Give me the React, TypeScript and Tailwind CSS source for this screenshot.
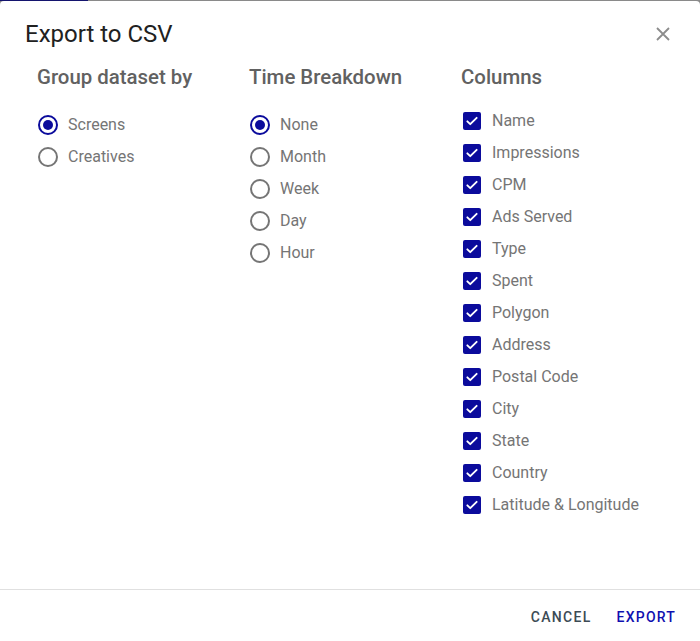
import React, { useState } from 'react';

const groupOptions = ['Screens', 'Creatives'];
const timeOptions = ['None', 'Month', 'Week', 'Day', 'Hour'];
const columnOptions = [
    'Name',
    'Impressions',
    'CPM',
    'Ads Served',
    'Type',
    'Spent',
    'Polygon',
    'Address',
    'Postal Code',
    'City',
    'State',
    'Country',
    'Latitude & Longitude',
];

const Radio = ({ label, checked, onClick }: { label: string; checked: boolean; onClick: () => void }) => (
    <button onClick={onClick} className="flex h-8 items-center gap-[10px] pl-px text-left">
        <span
            className={`flex h-5 w-5 items-center justify-center rounded-full border-2 ${checked ? 'border-[#0b0b9c]' : 'border-[#757575]'}`}
        >
            {checked && <span className="h-[10px] w-[10px] rounded-full bg-[#0b0b9c]" />}
        </span>
        <span className="text-[16px] text-[#757575]">{label}</span>
    </button>
);

const Checkbox = ({ label, checked, onClick }: { label: string; checked: boolean; onClick: () => void }) => (
    <button onClick={onClick} className="flex h-8 items-center gap-[11px] pl-[2px] text-left">
        <span
            className={`flex h-[18px] w-[18px] items-center justify-center rounded-[2px] ${checked ? 'bg-[#0b0b9c]' : 'border-2 border-[#757575]'}`}
        >
            {checked && (
                <svg width="14" height="14" viewBox="0 0 24 24" fill="none">
                    <path d="M4 12.5l5 5L20 6.5" stroke="white" strokeWidth="3.2" strokeLinecap="round" strokeLinejoin="round" />
                </svg>
            )}
        </span>
        <span className="text-[16px] text-[#757575]">{label}</span>
    </button>
);

const App = () => {
    const [group, setGroup] = useState('Screens');
    const [time, setTime] = useState('None');
    const [columns, setColumns] = useState<string[]>(columnOptions);

    const toggleColumn = (c: string) => {
        setColumns(columns.includes(c) ? columns.filter((x) => x !== c) : [...columns, c]);
    };

    return (
        <div className="flex h-[641px] w-[700px] flex-col bg-[#8a8a8a] font-['Roboto',sans-serif]">
            {/* backdrop edge */}
            <div className="flex h-px">
                <div className="w-[88px] bg-[#14146e]" />
            </div>

            <div className="flex flex-1 flex-col rounded-t bg-white">
                {/* Header */}
                <div className="flex items-center justify-between pl-[25px] pr-[30px] pt-[17px]">
                    <h2 className="text-[24px] leading-8 text-[#212121]">Export to CSV</h2>
                    <button className="text-[#8c8c8c]">
                        <svg width="14" height="14" viewBox="0 0 14 14">
                            <path d="M1 1L13 13M13 1L1 13" stroke="currentColor" strokeWidth="1.8" />
                        </svg>
                    </button>
                </div>

                {/* Body */}
                <div className="grid flex-1 grid-cols-[212px_212px_212px] px-[25px] pt-[13px]">
                    <div className="px-3">
                        <h3 className="text-[20.4px] font-medium leading-7 text-[#616161]">Group dataset by</h3>
                        <div className="mt-[18px] flex flex-col">
                            {groupOptions.map((o) => (
                                <Radio key={o} label={o} checked={group === o} onClick={() => setGroup(o)} />
                            ))}
                        </div>
                    </div>
                    <div className="px-3">
                        <h3 className="text-[20.4px] font-medium leading-7 text-[#616161]">Time Breakdown</h3>
                        <div className="mt-[18px] flex flex-col">
                            {timeOptions.map((o) => (
                                <Radio key={o} label={o} checked={time === o} onClick={() => setTime(o)} />
                            ))}
                        </div>
                    </div>
                    <div className="px-3">
                        <h3 className="text-[20.4px] font-medium leading-7 text-[#616161]">Columns</h3>
                        <div className="mt-[14px] flex flex-col">
                            {columnOptions.map((c) => (
                                <Checkbox key={c} label={c} checked={columns.includes(c)} onClick={() => toggleColumn(c)} />
                            ))}
                        </div>
                    </div>
                </div>

                {/* Footer */}
                <div className="flex h-[52px] items-center justify-end gap-[9px] border-t border-[#e0e0e0] pr-4 pt-1">
                    <button className="h-9 px-2 text-[14px] font-medium uppercase tracking-[1.3px] text-[#3d4b55]">Cancel</button>
                    <button className="h-9 px-2 text-[14px] font-medium uppercase tracking-[1.2px] text-[#1010b0]">Export</button>
                </div>
            </div>
        </div>
    );
};

export default App;
